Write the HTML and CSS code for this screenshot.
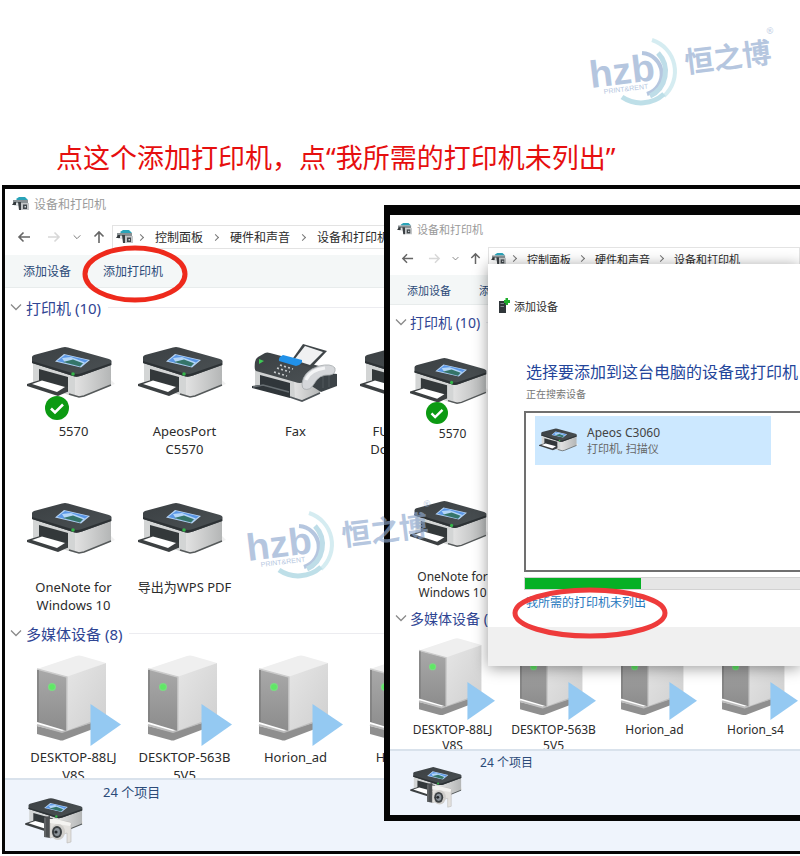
FILE: index.html
```html
<!DOCTYPE html>
<html lang="zh-CN">
  <head>
    <meta charset="UTF-8" />
    <meta name="viewport" content="width=device-width, initial-scale=1.0" />
    <title>添加打印机</title>
    <link rel="stylesheet" href="styles.css">
  </head>
  <body>
    <!-- Shared icons -->
    <svg class="sprite" width="0" height="0" aria-hidden="true">
      <defs>
        <linearGradient id="lidFill" x1="0" y1="0" x2="1" y2="1">
          <stop offset="0" stop-color="#3b4043"/><stop offset="1" stop-color="#4b5154"/>
        </linearGradient>
        <linearGradient id="sideFill" x1="0" y1="0" x2="1" y2="0">
          <stop offset="0" stop-color="#e2e2e2"/><stop offset="1" stop-color="#b4b6b6"/>
        </linearGradient>
        <linearGradient id="frontFill" x1="0" y1="0" x2="0" y2="1">
          <stop offset="0" stop-color="#a9a9a9"/><stop offset="1" stop-color="#8c8c8c"/>
        </linearGradient>
        <linearGradient id="caseFill" x1="0" y1="0" x2="1" y2="1">
          <stop offset="0" stop-color="#e6e6e6"/><stop offset="1" stop-color="#cfcfcf"/>
        </linearGradient>
      </defs>
      <symbol id="printer" viewBox="0 0 94 96">
        <path d="M82 60l6-2-4-4z" fill="#f0f0f0"/>
        <path d="M6 35L49 48V71L42 69 6 58z" fill="#d3d5d5"/>
        <path d="M48 49L84 37V59L57 70Q53 72 48 70z" fill="url(#sideFill)"/>
        <path d="M42 68L52 71 57 70 84 59" fill="none" stroke="#55595a" stroke-width="1.6"/>
        <path d="M12 43L41 51V66L12 57z" fill="#33383a"/>
        <path d="M0 58L13 54 41 61 40 66 31 70 0 60z" fill="#3c4042"/>
        <path d="M5 58L15 54.500 38 61 30 66z" fill="#fff"/>
        <path d="M5 31Q5 30 7 29L35 21.500Q38 20.500 41 21.500L82 33Q84.500 34 84.500 35V39L55 49.500Q50 51.500 46 50L5 37z" fill="url(#lidFill)"/>
        <path d="M5 35L45 47Q50 49 55 47L84 37V39L55 49.500Q50 51.500 46 50L5 37z" fill="#2d3235"/>
        <path d="M37 28L63 34 54 41.500 28 35.500z" fill="#b9d6f5"/>
        <path d="M38 29L61 34.300 53 40.500 30 35z" fill="#5b97e6"/>
        <path d="M35 32L44 31 58 36.500 53 40.500 38 36.800z" fill="#b4d6f8"/>
        <path d="M36 36L46 33.500 56 37.300 53 40.500z" fill="#35756a"/>
        <circle cx="46" cy="48" r="1.800" fill="#35b54a"/>
      </symbol>
      <symbol id="fax" viewBox="0 0 94 96">
        <path d="M6 42L54 56 71 46V66L56 74Q53 75 47 73L6 60z" fill="#d0d2d2"/>
        <path d="M45 54L71 46V67L55 74 46 72z" fill="url(#sideFill)"/>
        <path d="M41 71L53 75 71 67" fill="none" stroke="#50565a" stroke-width="1.800"/>
        <path d="M11 49L41 57V72L3 62 3 60 11 59z" fill="#30363a"/>
        <path d="M4 61L14 59 40 66" fill="none" stroke="#676e72" stroke-width="1.500"/>
        <path d="M6 36Q6 33 9 31L16 27Q18 26 21 27L70 40 69 48 55 56Q51 58 46 56L7 45Q5 44 6 36z" fill="url(#lidFill)"/>
        <path d="M54 18L78 25 62 42 42 35z" fill="#3f4548"/>
        <path d="M56 20L74 26 61 39 45 34z" fill="#f0f1f2"/>
        <path d="M34 29L53 34Q54 38 47 40L30 35Q29 31 34 29z" fill="#2191e8"/>
        <path d="M31 39l13 4M28 42l13 4M25 46l13 4" stroke="#c8cccd" stroke-width="1.700" stroke-dasharray="2 2.200"/>
        <path d="M10 33l5 2-5 3z" fill="#3ec955"/>
        <path d="M70 46L88 48V60L72 66 61 59z" fill="#3c4347"/>
        <path d="M74 50v12M80 49v12" stroke="#51595d"/>
        <path d="M53 58Q54 45 70 40 82 37 86 42 87 48 81 49 70 48 65 58 61 65 55 63 53 62 53 58z" fill="#d5d7da" stroke="#a5a9ac" stroke-width=".8"/>
        <path d="M57 54Q61 44 76 42" fill="none" stroke="#f4f5f6" stroke-width="3"/>
      </symbol>
      <symbol id="server" viewBox="0 0 94 96">
        <path d="M10 74L35 80 79 66V72L37 88Q35 89 32 88L10 82z" fill="#8f8f8f"/>
        <path d="M10 73L35 80 79 65" fill="none" stroke="#bdbdbd" stroke-width="2"/>
        <path d="M10 17L49 4Q52 3 55 4L79 11 40 26z" fill="#efefef"/>
        <path d="M39 25L79 11V64L39 79z" fill="url(#caseFill)"/>
        <path d="M10 17L40 25V79L10 70z" fill="url(#frontFill)"/>
        <path d="M10 17L40 25V79" fill="none" stroke="#cbcbcb" stroke-width="1.500"/>
        <path d="M11 18V70" stroke="#7e7e7e" stroke-width="1.500"/>
        <circle cx="25" cy="35" r="4" fill="#7bdc82"/>
        <circle cx="25" cy="35" r="2.800" fill="#5fe864"/>
        <path d="M63.500 52L94 72.500 63.500 94z" fill="#94c9f2"/>
      </symbol>
      <symbol id="check" viewBox="0 0 24 24">
        <circle cx="12" cy="12" r="12" fill="#0c9a12"/>
        <path d="M6 12.500L10 16.500 18 8.500" fill="none" stroke="#fff" stroke-width="2.600"/>
      </symbol>
      <symbol id="devices" viewBox="0 0 58 48">
        <use href="#printer" x="0" y="-13" width="64" height="65"/>
        <path d="M19 20L25 19V41L19 40z" fill="#4d5052"/>
        <path d="M20 21V40" stroke="#77797a"/>
        <path d="M25 22L44 25Q46 25 46 27V45L42 46V36L25 41z" fill="#e3e1de" stroke="#b9b7b4" stroke-width=".6"/>
        <path d="M25 22H31L46 26 45 29 25 26z" fill="#f4f3f1"/>
        <ellipse cx="33" cy="35" rx="7" ry="8" fill="#cfcdca"/>
        <ellipse cx="32" cy="35" rx="5" ry="6" fill="#3b3f42"/>
        <ellipse cx="32" cy="35" rx="3" ry="4" fill="#8b9299"/>
        <circle cx="31" cy="35" r="1.600" fill="#22262a"/>
      </symbol>
      <symbol id="devices-mini" viewBox="0 0 18 16">
        <path d="M4 3L7 1H13L16 4H5z" fill="#2aa3b8"/>
        <path d="M1 4H16V7H1z" fill="#8a9194"/>
        <path d="M2 7H7V10H2z" fill="#dfe3e5"/>
        <path d="M0 9L2 6H4V9z" fill="#33383b"/>
        <path d="M6 6H9V14H7z" fill="#3c4145"/>
        <path d="M9 7H17V14H9z" fill="#c3c6c8"/>
        <path d="M11 8.500H15V13H11z" fill="#42484c"/>
        <path d="M12.500 10H14V11.500H12.500z" fill="#cfd6da"/>
      </symbol>
      <symbol id="add-device" viewBox="0 0 12 16">
        <path d="M1 3H8V15H1z" fill="#30363a"/>
        <path d="M2.500 5H6V6H2.500zM2.500 8H6V9H2.500z" fill="#7d868b"/>
        <path d="M7.500 0H10V2H12V5H10V7H7.500V5H6V2H7.500z" fill="#1fae2c"/>
      </symbol>
      <symbol id="arrow" viewBox="0 0 14 14">
        <path d="M13 7H2M6.500 2.500L2 7 6.500 11.500" fill="none" stroke="currentColor" stroke-width="1.600"/>
      </symbol>
      <symbol id="chevron" viewBox="0 0 12 12">
        <path d="M1 3.500L6 8.500 11 3.500" fill="none" stroke="currentColor" stroke-width="1.300"/>
      </symbol>
      <symbol id="brand" viewBox="0 0 230 90">
        <g fill="none">
          <path d="M72 33A21 21 0 0 1 77 74" stroke="#8fa9cf" stroke-width="4"/>
          <path d="M88 33A27 27 0 0 1 80 76" stroke="#9ccbdc" stroke-width="5"/>
          <path d="M82 20A33 33 0 0 1 94 76" stroke="#bfe3ea" stroke-width="4"/>
          <path d="M94 74A34 34 0 0 1 52 77" stroke="#9ccfdd" stroke-width="5"/>
        </g>
        <g class="brand-text">
          <text class="brand-latin" transform="translate(21 68) rotate(-7)">hzb</text>
          <text class="brand-tag" transform="translate(34 74) rotate(-7)">PRINT&amp;RENT</text>
          <text class="brand-cjk" transform="translate(116 53) rotate(-7)">恒之博</text>
          <text class="brand-reg" transform="translate(197 14) rotate(-7)">®</text>
        </g>
      </symbol>
    </svg>

    <header class="caption">
      <h1>点这个添加打印机，点“我所需的打印机未列出”</h1>
    </header>

    <main class="stage">
      <!-- Step 1: devices and printers -->
      <section class="window">
        <div class="titlebar"><svg class="mini"><use href="#devices-mini"/></svg>设备和打印机</div>
        <nav class="navbar">
          <button class="nav-btn" aria-label="后退"><svg><use href="#arrow"/></svg></button>
          <button class="nav-btn off" aria-label="前进"><svg class="flip"><use href="#arrow"/></svg></button>
          <button class="nav-btn history" aria-label="历史"><svg><use href="#chevron"/></svg></button>
          <button class="nav-btn" aria-label="向上"><svg class="up"><use href="#arrow"/></svg></button>
          <div class="address">
            <svg class="mini"><use href="#devices-mini"/></svg>
            <span class="sep"></span><a href="#">控制面板</a>
            <span class="sep"></span><a href="#">硬件和声音</a>
            <span class="sep"></span><a href="#">设备和打印机</a>
          </div>
        </nav>
        <div class="toolbar">
          <button>添加设备</button>
          <button class="marked">添加打印机
            <svg class="ring ring-add" viewBox="0 0 106 58"><ellipse cx="53" cy="29" rx="50" ry="26"/></svg>
          </button>
        </div>
        <h2 class="group"><svg><use href="#chevron"/></svg>打印机 (10)</h2>
        <ul class="devices">
          <li><svg class="icon"><use href="#printer"/></svg><svg class="badge"><use href="#check"/></svg><span>5570</span></li>
          <li><svg class="icon"><use href="#printer"/></svg><span>ApeosPort<br>C5570</span></li>
          <li><svg class="icon"><use href="#fax"/></svg><span>Fax</span></li>
          <li><svg class="icon"><use href="#printer"/></svg><span>FUJI XEROX<br>DocuCentre</span></li>
          <li><svg class="icon"><use href="#printer"/></svg><span>OneNote for<br>Windows 10</span></li>
          <li><svg class="icon"><use href="#printer"/></svg><span>导出为WPS PDF</span></li>
        </ul>
        <h2 class="group"><svg><use href="#chevron"/></svg>多媒体设备 (8)</h2>
        <ul class="devices media">
          <li><svg class="icon"><use href="#server"/></svg><span>DESKTOP-88LJ<br>V8S</span></li>
          <li><svg class="icon"><use href="#server"/></svg><span>DESKTOP-563B<br>5V5</span></li>
          <li><svg class="icon"><use href="#server"/></svg><span>Horion_ad</span></li>
          <li><svg class="icon"><use href="#server"/></svg><span>Horion_s4</span></li>
        </ul>
        <footer class="status"><svg><use href="#devices"/></svg><p>24 个项目</p></footer>
      </section>

      <!-- Step 2: same window with the add dialog open -->
      <section class="window window-small">
        <div class="titlebar"><svg class="mini"><use href="#devices-mini"/></svg>设备和打印机</div>
        <nav class="navbar">
          <button class="nav-btn" aria-label="后退"><svg><use href="#arrow"/></svg></button>
          <button class="nav-btn off" aria-label="前进"><svg class="flip"><use href="#arrow"/></svg></button>
          <button class="nav-btn history" aria-label="历史"><svg><use href="#chevron"/></svg></button>
          <button class="nav-btn" aria-label="向上"><svg class="up"><use href="#arrow"/></svg></button>
          <div class="address">
            <svg class="mini"><use href="#devices-mini"/></svg>
            <span class="sep"></span><a href="#">控制面板</a>
            <span class="sep"></span><a href="#">硬件和声音</a>
            <span class="sep"></span><a href="#">设备和打印机</a>
          </div>
        </nav>
        <div class="toolbar">
          <button>添加设备</button>
          <button>添加打印机</button>
        </div>
        <h2 class="group"><svg><use href="#chevron"/></svg>打印机 (10)</h2>
        <ul class="devices single">
          <li><svg class="icon"><use href="#printer"/></svg><svg class="badge"><use href="#check"/></svg><span>5570</span></li>
          <li><svg class="icon"><use href="#printer"/></svg><span>OneNote for<br>Windows 10</span></li>
        </ul>
        <h2 class="group"><svg><use href="#chevron"/></svg>多媒体设备 (8)</h2>
        <ul class="devices media">
          <li><svg class="icon"><use href="#server"/></svg><span>DESKTOP-88LJ<br>V8S</span></li>
          <li><svg class="icon"><use href="#server"/></svg><span>DESKTOP-563B<br>5V5</span></li>
          <li><svg class="icon"><use href="#server"/></svg><span>Horion_ad</span></li>
          <li><svg class="icon"><use href="#server"/></svg><span>Horion_s4</span></li>
        </ul>
        <footer class="status"><svg><use href="#devices"/></svg><p>24 个项目</p></footer>

        <div class="dialog" role="dialog" aria-labelledby="dialogTitle">
          <div class="dialog-title"><svg><use href="#add-device"/></svg>添加设备</div>
          <div class="dialog-body">
            <h2 id="dialogTitle">选择要添加到这台电脑的设备或打印机</h2>
            <label class="hint" for="search">正在搜索设备</label>
            <div class="results">
              <button class="result">
                <svg><use href="#printer"/></svg>
                <span class="result-text"><strong>Apeos C3060</strong><small>打印机, 扫描仪</small></span>
              </button>
            </div>
            <progress id="search" value="42" max="100"></progress>
            <a class="missing" href="#">我所需的打印机未列出
              <svg class="ring ring-link" viewBox="0 0 156 52"><ellipse cx="78" cy="26" rx="75" ry="23"/></svg>
            </a>
          </div>
          <div class="dialog-footer"></div>
        </div>
      </section>
    </main>

    <svg class="brand brand-top" aria-hidden="true"><use href="#brand"/></svg>
    <svg class="brand brand-middle" aria-hidden="true"><use href="#brand"/></svg>
  </body>
</html>
```

FILE: styles.css
```css
:root {
  --ink: #2b2b2b;
  --link-navy: #2b4a78;
  --group-blue: #2f4593;
  --mark-red: #ee2a1c;
  --bar-bg: #f4f7f7;
  --status-bg: #eff4fc;
}
* { box-sizing: border-box; }
body {
  margin: 0;
  position: relative;
  background: #fff;
  color: var(--ink);
  font-family: "Noto Sans", "Noto Sans CJK SC", sans-serif;
  overflow-x: hidden;
}
button { font: inherit; color: inherit; background: none; border: 0; padding: 0; }
a { color: inherit; text-decoration: none; }
h1, h2, p, ul { margin: 0; padding: 0; font-weight: 400; }
ul { list-style: none; }
svg { display: block; flex: none; }
.sprite { position: absolute; }

.caption { height: 185px; padding: 138px 0 0 56px; }
.caption h1 { font-size: 27px; line-height: 40px; color: #e60f0f; white-space: nowrap; }
.stage { position: relative; margin-left: 2px; }

/* Explorer window */
.window {
  --text: 12px;
  --label: 13px;
  --group: 15px;
  --cell: 111px;
  --icon-w: 94px;
  --icon-h: 96px;
  --line: 18px;
  position: relative;
  background: #fff;
  border: 3px solid #050505;
  border-top-width: 4px;
  border-right: 0;
  font-size: var(--text);
}
.titlebar { display: flex; align-items: center; gap: 4px; height: 30px; padding-left: 7px; color: #9a9a9a; }
.mini { width: 18px; height: 16px; }
.navbar { display: flex; align-items: center; height: 36px; padding-left: 12px; white-space: nowrap; }
.nav-btn { width: 14px; margin-right: 16px; color: #666; }
.nav-btn svg { width: 14px; height: 14px; }
.nav-btn.off { color: #d8d8d8; margin-right: 12px; }
.nav-btn.history { width: 8px; margin-right: 11px; }
.nav-btn.history svg { width: 8px; height: 8px; }
.nav-btn:nth-child(4) { margin-right: 6px; }
.flip { transform: scaleX(-1); }
.up { transform: rotate(90deg); }
.address { display: flex; align-items: center; flex: 1; height: 24px; padding-left: 3px; border: 1px solid #e3e3e3; }
.sep { width: 5px; height: 5px; margin: 0 12px 0 10px; border: solid #777; border-width: 1px 1px 0 0; transform: rotate(45deg); }
.sep:first-of-type { margin-left: 4px; }
.toolbar {
  display: flex;
  align-items: center;
  gap: 32px;
  height: 33px;
  padding-left: 18px;
  background: var(--bar-bg);
  border-bottom: 1px solid #e8ecec;
  color: var(--link-navy);
}
.marked { position: relative; }
.ring { position: absolute; z-index: 2; overflow: visible; pointer-events: none; }
.ring ellipse { fill: none; stroke: var(--mark-red); stroke-width: 5px; }
.ring-add { width: 106px; height: 58px; left: -21px; top: -17px; }
.group {
  display: flex;
  align-items: center;
  gap: 4px;
  height: 38px;
  padding-left: 5px;
  font-size: var(--group);
  color: var(--group-blue);
}
.group svg { width: 12px; height: 12px; color: #8a8a8a; }
.group::after { content: ""; flex: 1; height: 1px; margin-left: 3px; background: #ececf0; }
.devices {
  display: grid;
  grid-template-columns: repeat(4, var(--cell));
  row-gap: 24px;
  padding-left: 13px;
  font-size: var(--label);
  line-height: var(--line);
  text-align: center;
}
.devices li { position: relative; min-height: calc(var(--icon-h) + var(--line) * 2); white-space: nowrap; }
.icon { width: var(--icon-w); height: var(--icon-h); margin: 0 auto; }
.badge { position: absolute; width: 24px; height: 24px; left: 27px; top: 70px; }
.media { height: 126px; overflow: hidden; }
.status {
  display: flex;
  gap: 20px;
  height: 73px;
  padding-left: 20px;
  background: var(--status-bg);
  border-top: 2px solid #d9e2ec;
  color: var(--link-navy);
  font-size: 13px;
}
.status svg { width: 58px; height: 48px; margin-top: 17px; }
.status p { line-height: 24px; }

/* Second window, drawn a step smaller */
.window-small {
  --text: 11px;
  --label: 12px;
  --group: 14px;
  --cell: 101px;
  --icon-w: 85px;
  --icon-h: 87px;
  --line: 16px;
  position: absolute;
  top: 20px;
  left: calc(48% - 1px);
  right: 0;
  border-width: 10px 0 6px 6px;
}
.window-small .titlebar { height: 27px; }
.window-small .mini { width: 16px; height: 14px; }
.window-small .navbar { height: 33px; padding-left: 11px; }
.window-small .nav-btn { width: 13px; margin-right: 14px; }
.window-small .nav-btn svg { width: 13px; height: 13px; }
.window-small .nav-btn.off { margin-right: 11px; }
.window-small .nav-btn.history { width: 7px; margin-right: 10px; }
.window-small .nav-btn.history svg { width: 7px; height: 7px; }
.window-small .nav-btn:nth-child(4) { margin-right: 6px; }
.window-small .address { padding-left: 2px; }
.window-small .sep { margin: 0 11px 0 8px; }
.window-small .sep:first-of-type { margin-left: 4px; }
.window-small .toolbar { gap: 28px; height: 30px; padding-left: 17px; }
.window-small .group { height: 34px; gap: 3px; }
.window-small .devices { row-gap: 24px; padding-left: 12px; }
.window-small .single { grid-template-columns: var(--cell); }
.window-small .badge { width: 22px; height: 22px; left: 24px; top: 63px; }
.window-small .media { height: 114px; }
.window-small .status { height: 66px; gap: 18px; }
.window-small .status svg { width: 52px; height: 43px; margin-top: 15px; }
.window-small .status p { font-size: 12px; }

/* Add device dialog */
.dialog {
  position: absolute;
  top: 49px;
  left: 98px;
  right: 0;
  background: #fff;
  box-shadow: 0 2px 14px rgba(0, 0, 0, 0.4);
  white-space: nowrap;
}
.dialog-title { display: flex; align-items: center; gap: 4px; height: 52px; padding: 32px 0 0 10px; font-size: 11px; }
.dialog-title svg { width: 12px; height: 16px; }
.dialog-body { display: flex; flex-direction: column; align-items: flex-start; padding: 44px 0 15px 36px; }
.dialog-body h2 { padding-left: 2px; font-size: 16px; line-height: 24px; color: #23459a; }
.hint { padding: 2px 0 9px 2px; font-size: 10px; line-height: 16px; color: #777; }
.results { align-self: stretch; height: 161px; padding: 3px 29px 0 9px; border: 2px solid #707070; border-right: 0; }
.result { display: flex; align-items: center; gap: 6px; width: 100%; height: 49px; padding-left: 4px; background: #cce8ff; text-align: left; }
.result svg { width: 42px; height: 43px; }
.result-text { display: flex; flex-direction: column; line-height: 16px; }
.result-text strong { font-weight: 400; font-size: 12px; color: #444; }
.result-text small { font-size: 11px; color: #666; }
progress {
  appearance: none;
  align-self: stretch;
  width: 100%;
  height: 13px;
  margin-top: 5px;
  border: 0;
}
progress::-webkit-progress-bar { background: #e6e6e6; border: 1px solid #d2d2d2; border-right: 0; }
progress::-webkit-progress-value { background: #06b025; }
.missing { position: relative; margin-top: 4px; padding-left: 2px; font-size: 12px; line-height: 18px; color: #2878be; }
.ring-link { width: 156px; height: 52px; left: -12px; top: -7px; }
.ring-link ellipse { stroke: #ee3b3b; }
.dialog-footer { height: 39px; background: #f0f0f0; }

/* Brand watermark */
.brand { position: absolute; width: 230px; height: 90px; opacity: 0.65; pointer-events: none; }
.brand-top { top: 20px; right: 0; }
.brand-middle { top: 493px; left: 227px; }
.brand-text { fill: #8fa9cf; }
.brand-latin { font: 700 38px "Liberation Sans", sans-serif; }
.brand-tag { font: 400 7px "Liberation Sans", sans-serif; }
.brand-cjk { font: 700 29px "Noto Sans CJK SC", sans-serif; }
.brand-reg { font: 400 9px "Liberation Sans", sans-serif; }
```
